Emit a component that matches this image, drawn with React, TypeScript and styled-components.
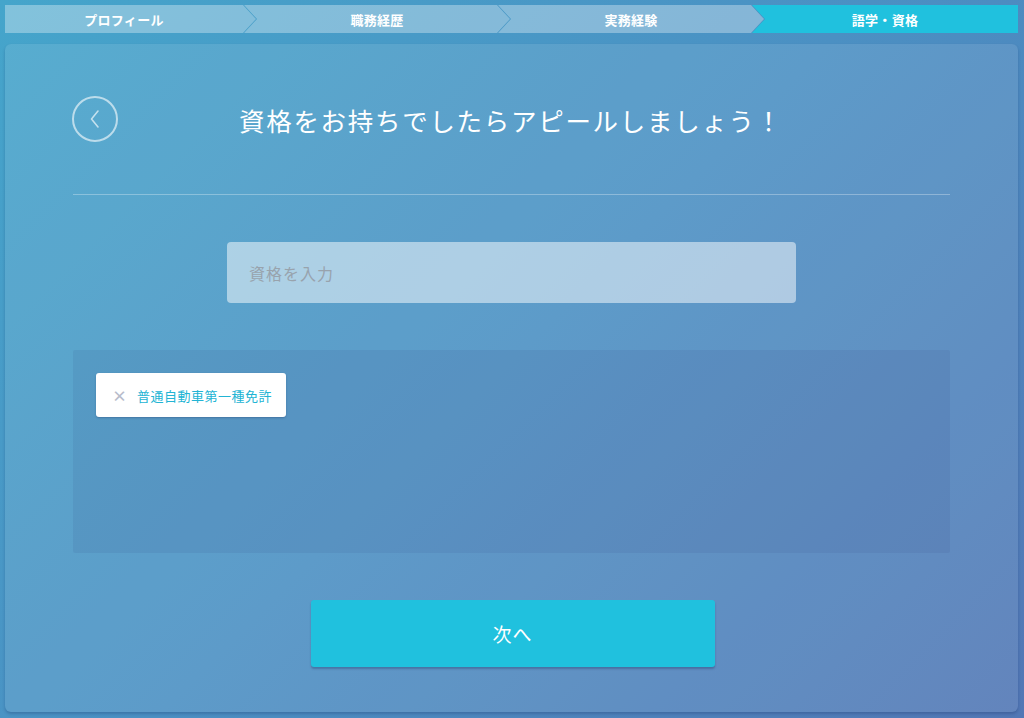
import React from "react";
import styled, { createGlobalStyle } from "styled-components";

const Global = createGlobalStyle`
  html, body { margin: 0; padding: 0; }
  body {
    font-family: "Noto Sans CJK JP", "Noto Sans", sans-serif;
    background: linear-gradient(135deg, #45a5cb 0%, #4b90c3 50%, #5277b5 100%);
    min-height: 100vh;
  }
  #root { min-height: 100vh; }
`;

const Page = styled.div`
  box-sizing: border-box;
  height: 718px;
  padding: 5px 6px 6px 5px;
  display: flex;
  flex-direction: column;
  gap: 11px;
`;

const Stepper = styled.div`
  display: flex;
  height: 28px;
  flex-shrink: 0;
`;

type Pos = "first" | "mid" | "last";

const clips: Record<Pos, string> = {
  first: "polygon(0 0, calc(100% - 13px) 0, 100% 50%, calc(100% - 13px) 100%, 0 100%)",
  mid: "polygon(0 0, calc(100% - 13px) 0, 100% 50%, calc(100% - 13px) 100%, 0 100%, 13px 50%)",
  last: "polygon(0 0, 100% 0, 100% 100%, 0 100%, 13px 50%)",
};

const Step = styled.div<{ $pos: Pos; $active?: boolean }>`
  box-sizing: border-box;
  flex: ${(p) => (p.$pos === "first" ? "0 0 251px" : p.$pos === "mid" ? "0 0 266px" : "1 1 auto")};
  margin-left: ${(p) => (p.$pos === "first" ? "0" : "-12px")};
  padding-left: ${(p) => (p.$pos === "mid" ? "13px" : "0")};
  padding-right: ${(p) => (p.$pos === "last" ? "0" : "13px")};
  clip-path: ${(p) => clips[p.$pos]};
  background: ${(p) => (p.$active ? "#20c1de" : "rgba(255,255,255,0.33)")};
  display: flex;
  align-items: center;
  justify-content: center;
  color: #fff;
  font-size: 13px;
  font-weight: 700;
  letter-spacing: 0.3px;
`;

const Card = styled.div`
  flex: 1;
  background: rgba(255, 255, 255, 0.1);
  border-radius: 6px;
  box-shadow: 0 2px 3px rgba(20, 40, 90, 0.25);
  padding: 0 68px;
  display: flex;
  flex-direction: column;
  align-items: center;
`;

const Header = styled.div`
  align-self: stretch;
  height: 151px;
  box-sizing: border-box;
  border-bottom: 1px solid rgba(255, 255, 255, 0.3);
  display: flex;
  align-items: center;
`;

const BackButton = styled.button`
  width: 46px;
  height: 46px;
  border-radius: 50%;
  border: 2.5px solid rgba(255, 255, 255, 0.6);
  background: transparent;
  padding: 0;
  display: flex;
  align-items: center;
  justify-content: center;
  flex-shrink: 0;
  margin-left: -1px;
`;

const Title = styled.h1`
  flex: 1;
  margin: 0 46px 0 0;
  text-align: center;
  color: #fff;
  font-size: 25.5px;
  font-weight: 400;
  letter-spacing: 1.7px;
`;

const InputBox = styled.input`
  margin-top: 47px;
  width: 569px;
  height: 61px;
  box-sizing: border-box;
  border: none;
  border-radius: 4px;
  background: rgba(255, 255, 255, 0.5);
  padding: 0 22px;
  font-family: "Noto Sans CJK JP", sans-serif;
  font-size: 16px;
  letter-spacing: 1px;
  color: #444;
  outline: none;
  &::placeholder { color: #98a3ad; }
`;

const TagArea = styled.div`
  margin-top: 47px;
  align-self: stretch;
  height: 203px;
  box-sizing: border-box;
  background: rgba(40, 60, 120, 0.09);
  border-radius: 2px;
  padding: 23px;
  display: flex;
  flex-wrap: wrap;
  align-content: flex-start;
  gap: 10px;
`;

const Tag = styled.div`
  height: 44px;
  box-sizing: border-box;
  background: #fff;
  border-radius: 3px;
  box-shadow: 0 1px 2px rgba(20, 40, 90, 0.3);
  padding: 0 14px 0 16px;
  display: flex;
  align-items: center;
  gap: 10px;
`;

const TagClose = styled.span`
  color: #b7bccb;
  font-size: 15px;
  font-weight: 700;
  line-height: 1;
`;

const TagText = styled.span`
  color: #22b4d4;
  font-size: 13px;
  letter-spacing: 0.5px;
`;

const NextButton = styled.button`
  margin-top: 47px;
  width: 404px;
  height: 67px;
  border: none;
  border-radius: 3px;
  background: #20c1de;
  box-shadow: 0 2px 2px rgba(20, 40, 90, 0.3);
  color: #fff;
  font-family: "Noto Sans CJK JP", sans-serif;
  font-size: 19px;
  font-weight: 400;
  letter-spacing: 1px;
  margin-left: 2px;
`;

export default function App() {
  return (
    <>
      <Global />
      <Page>
        <Stepper>
          <Step $pos="first">プロフィール</Step>
          <Step $pos="mid">職務経歴</Step>
          <Step $pos="mid">実務経験</Step>
          <Step $pos="last" $active>語学・資格</Step>
        </Stepper>
        <Card>
          <Header>
            <BackButton aria-label="戻る">
              <svg width="14" height="22" viewBox="0 0 14 22">
                <path d="M10 3 L3.5 11 L10 19" fill="none" stroke="rgba(255,255,255,0.65)" strokeWidth="1.6" strokeLinecap="round" strokeLinejoin="round" />
              </svg>
            </BackButton>
            <Title>資格をお持ちでしたらアピールしましょう！</Title>
          </Header>
          <InputBox placeholder="資格を入力" />
          <TagArea>
            <Tag>
              <TagClose>×</TagClose>
              <TagText>普通自動車第一種免許</TagText>
            </Tag>
          </TagArea>
          <NextButton>次へ</NextButton>
        </Card>
      </Page>
    </>
  );
}
